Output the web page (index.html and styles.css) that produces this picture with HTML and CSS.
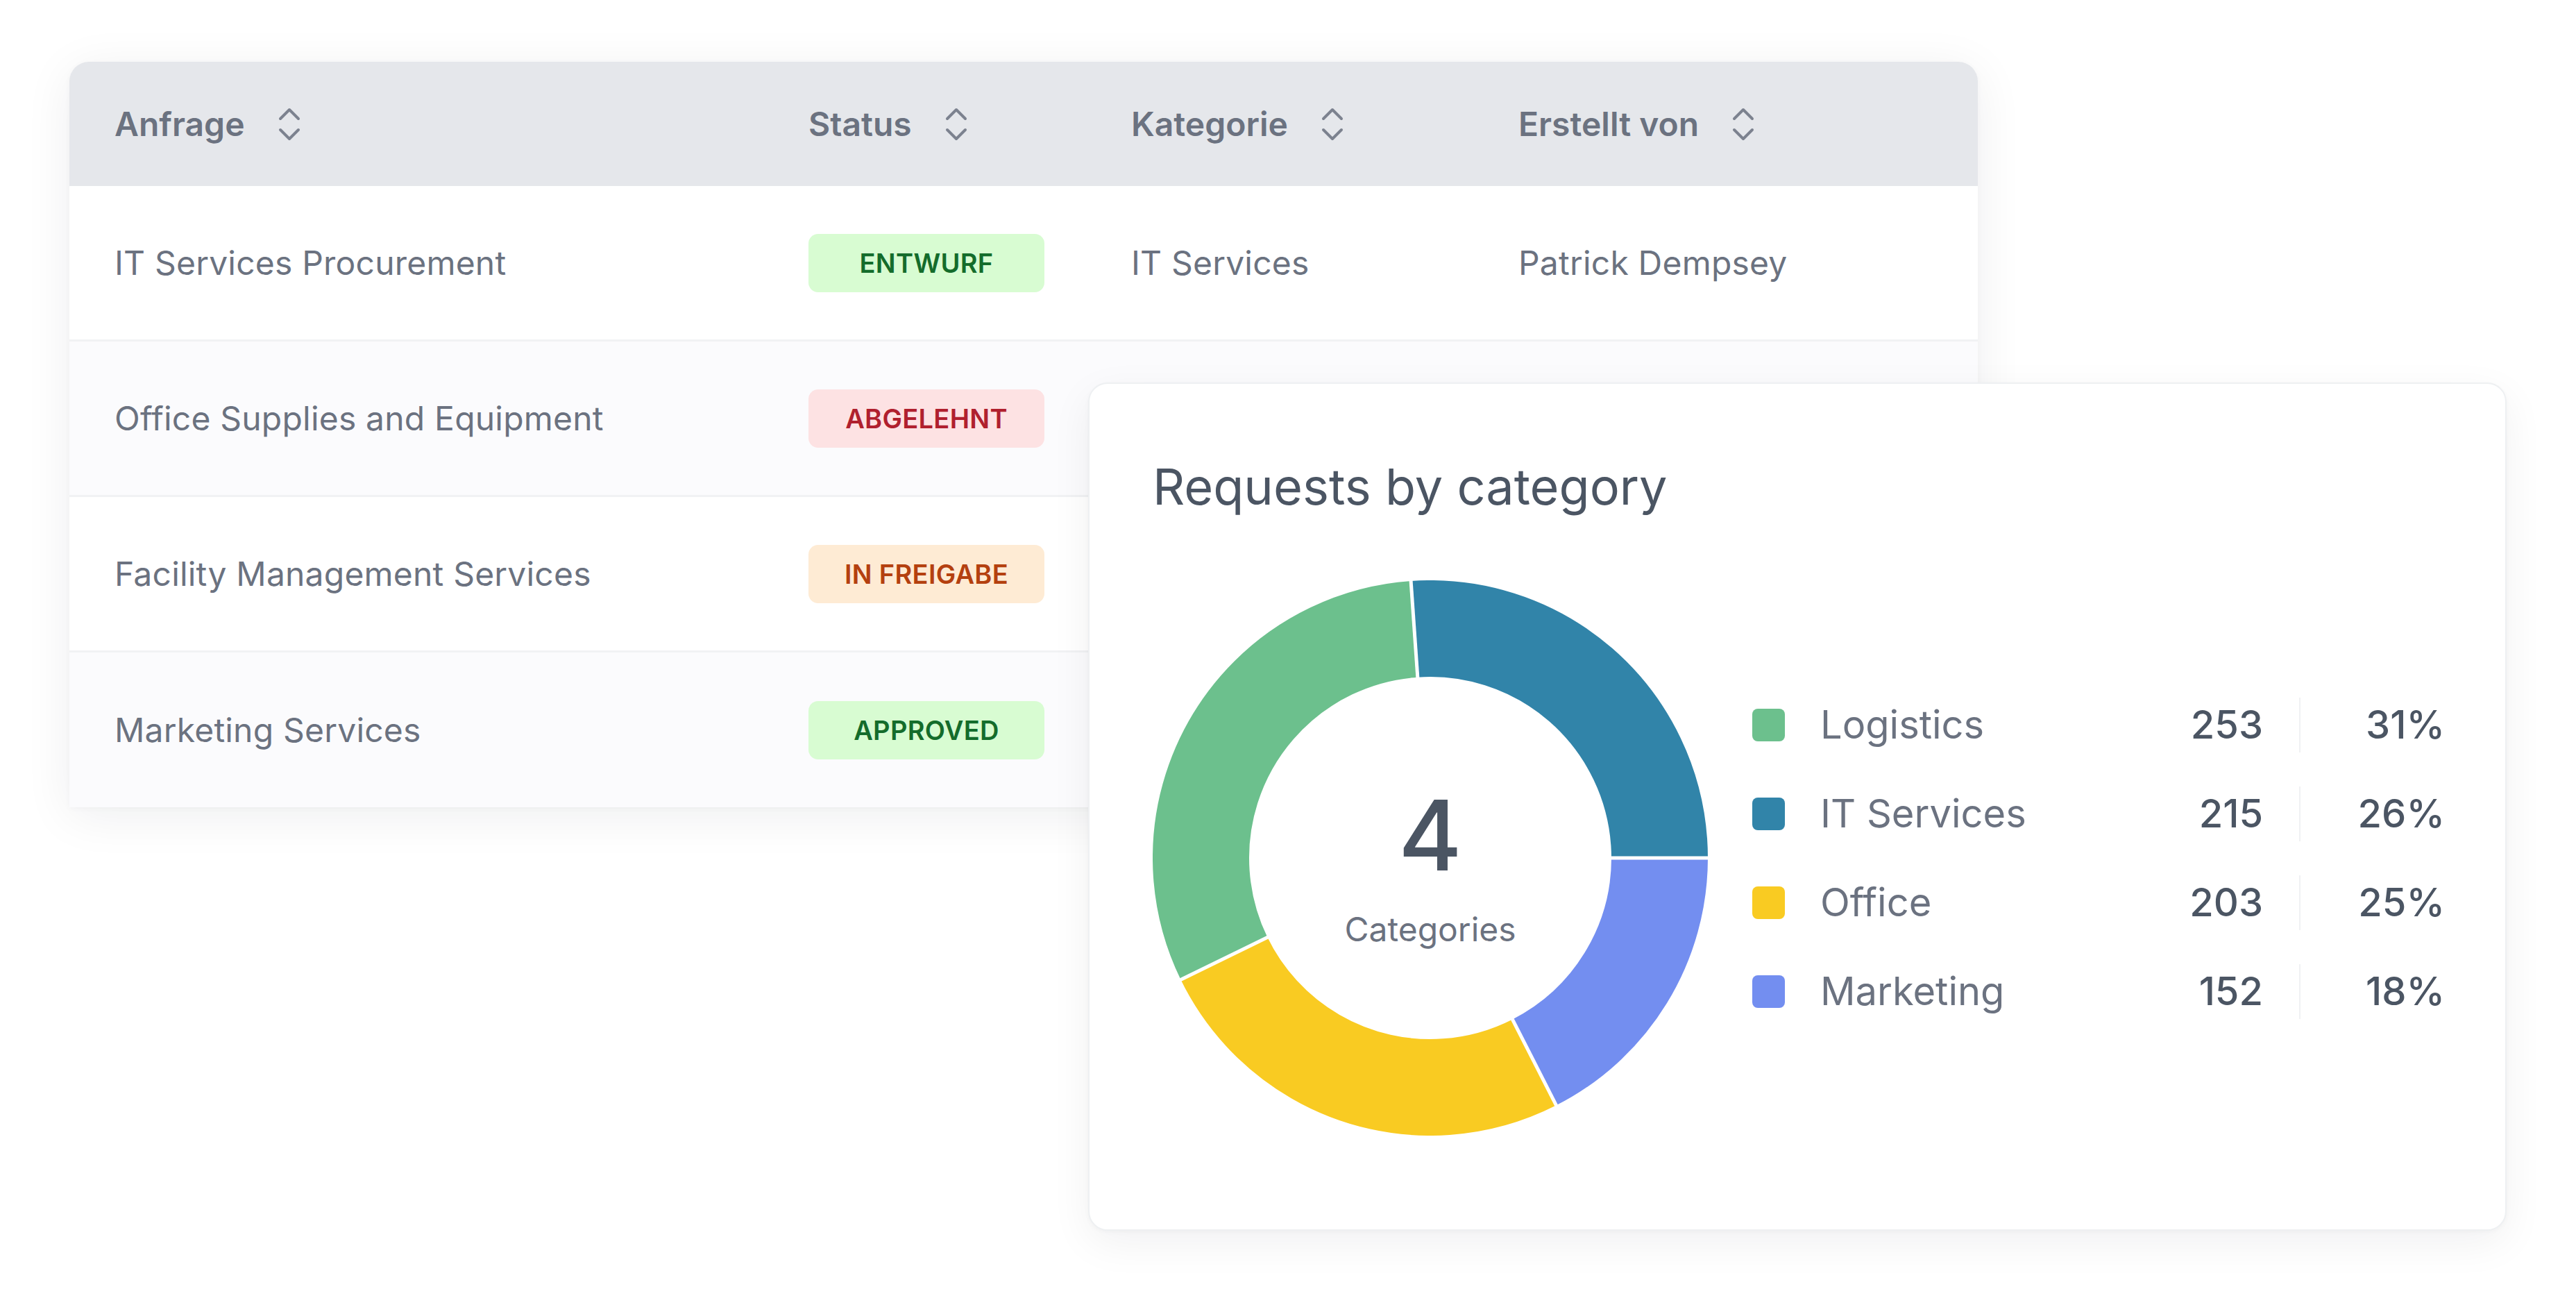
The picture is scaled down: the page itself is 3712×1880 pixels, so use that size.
FILE: index.html
```html
<!DOCTYPE html>
<html lang="de">
<head>
<meta charset="utf-8">
<title>Requests</title>
<link rel="stylesheet" href="styles.css">
</head>
<body>
<div class="stage">
  <div class="table-card">
    <div class="thead">
      <div class="th">Anfrage <svg class="sort" viewBox="0 0 32 50"><polyline points="3,17 16,4 29,17"/><polyline points="3,33 16,46 29,33"/></svg></div>
      <div class="th">Status <svg class="sort" viewBox="0 0 32 50"><polyline points="3,17 16,4 29,17"/><polyline points="3,33 16,46 29,33"/></svg></div>
      <div class="th">Kategorie <svg class="sort" viewBox="0 0 32 50"><polyline points="3,17 16,4 29,17"/><polyline points="3,33 16,46 29,33"/></svg></div>
      <div class="th">Erstellt von <svg class="sort" viewBox="0 0 32 50"><polyline points="3,17 16,4 29,17"/><polyline points="3,33 16,46 29,33"/></svg></div>
    </div>
    <div class="tr">
      <div class="td">IT Services Procurement</div>
      <div class="td"><span class="badge badge-green">ENTWURF</span></div>
      <div class="td">IT Services</div>
      <div class="td">Patrick Dempsey</div>
    </div>
    <div class="tr alt">
      <div class="td">Office Supplies and Equipment</div>
      <div class="td"><span class="badge badge-red">ABGELEHNT</span></div>
      <div class="td"></div>
      <div class="td"></div>
    </div>
    <div class="tr">
      <div class="td">Facility Management Services</div>
      <div class="td"><span class="badge badge-orange">IN FREIGABE</span></div>
      <div class="td"></div>
      <div class="td"></div>
    </div>
    <div class="tr alt last">
      <div class="td">Marketing Services</div>
      <div class="td"><span class="badge badge-green">APPROVED</span></div>
      <div class="td"></div>
      <div class="td"></div>
    </div>
  </div>

  <div class="chart-card">
    <h2 class="chart-title">Requests by category</h2>
    <div class="chart-body">
      <div class="donut">
        <svg class="donut-svg" viewBox="0 0 800 800" width="800" height="800">
          <g transform="rotate(-94 400 400)" fill="none" stroke-width="139">
            <circle cx="400" cy="400" r="330.5" stroke="#3184a9" stroke-dasharray="542.2 2076.6" stroke-dashoffset="0"/>
            <circle cx="400" cy="400" r="330.5" stroke="#738ef0" stroke-dasharray="363.4 2076.6" stroke-dashoffset="-542.2"/>
            <circle cx="400" cy="400" r="330.5" stroke="#f9cb22" stroke-dasharray="524.9 2076.6" stroke-dashoffset="-905.6"/>
            <circle cx="400" cy="400" r="330.5" stroke="#6cc08d" stroke-dasharray="646.1 2076.6" stroke-dashoffset="-1430.5"/>
          </g>
          <g stroke="#ffffff" stroke-width="5" stroke-linecap="butt">
            <line x1="382.6" y1="150.6" x2="371.4" y2="-9.0"/>
            <line x1="650" y1="400" x2="810" y2="400"/>
            <line x1="513.5" y1="622.8" x2="586.1" y2="765.3"/>
            <line x1="175.3" y1="509.6" x2="31.5" y2="579.7"/>
          </g>
        </svg>
        <div class="donut-label">
          <span class="donut-num">4</span>
          <span class="donut-sub">Categories</span>
        </div>
      </div>
      <div class="legend">
        <div class="legend-row">
          <span class="swatch sw-green"></span>
          <span class="legend-name">Logistics</span>
          <span class="legend-count">253</span>
          <span class="legend-div"></span>
          <span class="legend-pct">31%</span>
        </div>
        <div class="legend-row">
          <span class="swatch sw-blue"></span>
          <span class="legend-name">IT Services</span>
          <span class="legend-count">215</span>
          <span class="legend-div"></span>
          <span class="legend-pct">26%</span>
        </div>
        <div class="legend-row">
          <span class="swatch sw-yellow"></span>
          <span class="legend-name">Office</span>
          <span class="legend-count">203</span>
          <span class="legend-div"></span>
          <span class="legend-pct">25%</span>
        </div>
        <div class="legend-row">
          <span class="swatch sw-purple"></span>
          <span class="legend-name">Marketing</span>
          <span class="legend-count">152</span>
          <span class="legend-div"></span>
          <span class="legend-pct">18%</span>
        </div>
      </div>
    </div>
  </div>
</div>
</body>
</html>
```

FILE: styles.css
```css
* { box-sizing: border-box; }

html, body {
  margin: 0;
  padding: 0;
  background: #ffffff;
}

body {
  font-family: Inter, "Noto Sans", "Liberation Sans", sans-serif;
  color: #6b7280;
}

.stage {
  position: relative;
  width: 3712px;
  height: 1880px;
  overflow: hidden;
  padding: 89px 0 0 100px;
}

/* ---------- table ---------- */
.table-card {
  width: 2750px;
  background: #ffffff;
  border-radius: 28px 28px 0 0;
  box-shadow: 0 12px 70px rgba(15, 23, 42, 0.07), 0 2px 8px rgba(15, 23, 42, 0.03);
}

.thead,
.tr {
  display: grid;
  grid-template-columns: 1000px 465px 558px 1fr;
  padding-left: 65px;
}

.thead {
  height: 179px;
  background: #e5e7eb;
  border-radius: 28px 28px 0 0;
  align-items: center;
}

.th {
  display: flex;
  align-items: center;
  gap: 48px;
  font-size: 48px;
  font-weight: 600;
  color: #6b7280;
}

.sort {
  width: 32px;
  height: 50px;
  fill: none;
  stroke: #7c828f;
  stroke-width: 4;
  stroke-linecap: round;
  stroke-linejoin: round;
}

.tr {
  height: 224px;
  align-items: center;
  background: #ffffff;
  border-bottom: 3px solid #f1f2f4;
}

.tr.alt { background: #fbfbfd; }
.tr.last { border-bottom: none; height: 223px; }

.td {
  font-size: 48px;
  font-weight: 400;
  color: #6b7280;
  letter-spacing: 0.2px;
}

.badge {
  display: inline-flex;
  align-items: center;
  justify-content: center;
  width: 340px;
  height: 84px;
  border-radius: 14px;
  font-size: 38px;
  font-weight: 600;
  letter-spacing: 0.3px;
}

.badge-green { background: #d8fcd2; color: #146c2b; }
.badge-red { background: #fde2e3; color: #b0202e; }
.badge-orange { background: #feebd4; color: #b4400f; }

/* ---------- chart card ---------- */
.chart-card {
  position: absolute;
  left: 1568px;
  top: 551px;
  width: 2044px;
  height: 1222px;
  background: #ffffff;
  border: 2px solid #eef0f2;
  border-radius: 28px;
  box-shadow: 0 18px 60px rgba(15, 23, 42, 0.06), 0 2px 6px rgba(15, 23, 42, 0.03);
  padding: 108px 0 0 91px;
}

.chart-title {
  margin: 0;
  font-size: 72px;
  font-weight: 400;
  line-height: 80px;
  color: #4b5563;
}

.chart-body {
  display: flex;
  align-items: center;
  gap: 64px;
  margin-top: 95px;
}

.donut {
  display: grid;
  width: 800px;
  height: 800px;
  flex: none;
}

.donut-svg,
.donut-label {
  grid-area: 1 / 1;
}

.donut-svg { display: block; }

.donut-label {
  display: flex;
  flex-direction: column;
  align-items: center;
  padding-top: 297px;
}

.donut-num {
  font-size: 140px;
  line-height: 140px;
  font-weight: 500;
  color: #4b5563;
}

.donut-sub {
  margin-top: 37px;
  font-size: 48px;
  line-height: 58px;
  color: #6b7280;
}

.legend {
  display: flex;
  flex-direction: column;
  width: 998px;
}

.legend-row {
  display: flex;
  align-items: center;
  height: 128px;
}

.swatch {
  width: 47px;
  height: 47px;
  border-radius: 8px;
  margin-right: 51px;
  flex: none;
}

.sw-green { background: #6cc08d; }
.sw-blue { background: #3184a9; }
.sw-yellow { background: #f9cb22; }
.sw-purple { background: #738ef0; }

.legend-name {
  flex: 1;
  font-size: 56px;
  color: #6b7280;
}

.legend-count {
  width: 202px;
  padding-right: 52px;
  text-align: right;
  font-size: 56px;
  font-weight: 500;
  color: #4b5563;
}

.legend-div {
  width: 2px;
  height: 79px;
  background: #f0f1f3;
  flex: none;
}

.legend-pct {
  width: 208px;
  text-align: right;
  font-size: 56px;
  font-weight: 500;
  color: #4b5563;
}
```
